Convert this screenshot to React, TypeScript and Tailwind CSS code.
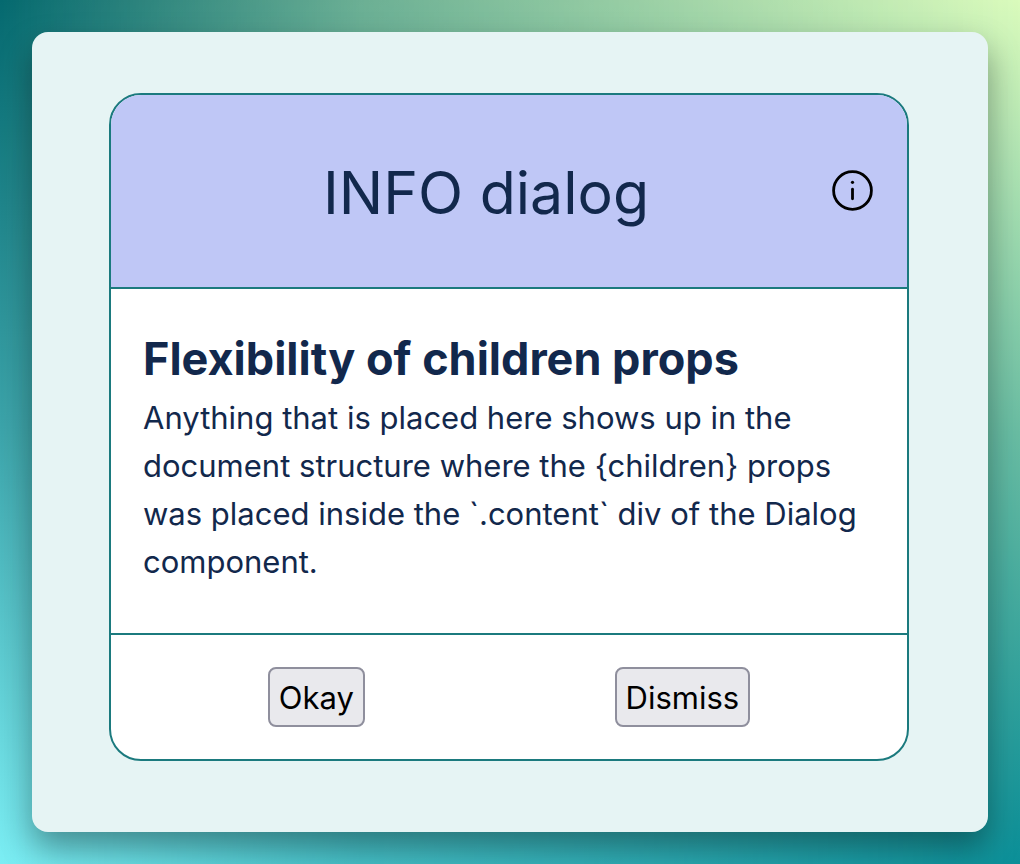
const bodyText =
  "Anything that is placed here shows up in the document structure where the {children} props was placed inside the `.content` div of the Dialog component.";

const buttonClass =
  "rounded-lg border-2 border-[#8f8f9d] bg-[#e9e9ed] px-[9px] pt-[5px] pb-[3px] text-[31px] leading-[48px]";

export default function App() {
  return (
    <div className="relative isolate min-h-screen bg-[linear-gradient(to_bottom,#05696f,#3da5ab_50%,#7ceef4)] p-8 font-['Inter',sans-serif]">
      <div
        aria-hidden="true"
        className="absolute inset-0 -z-10 bg-[linear-gradient(to_bottom,#dafbbc,#69bda3_50%,#0b8f98)] [mask-image:linear-gradient(to_right,transparent,rgba(0,0,0,0.48)_35%,black)]"
      />
      <main className="min-h-[800px] rounded-2xl bg-[#e6f4f4] pt-[61px] pr-[79px] pb-[70px] pl-[77px] shadow-[0_16px_32px_rgba(0,0,0,0.36)]">
        <section
          role="dialog"
          aria-labelledby="dialog-title"
          className="mx-auto max-w-[800px] overflow-hidden rounded-[32px] border-2 border-[#1b7a7e] bg-white text-[#12284c]"
        >
          <header className="grid grid-cols-[1fr_auto] items-center border-b-2 border-[#1b7a7e] bg-[#bfc7f6] px-8 py-12">
            <h1 id="dialog-title" className="pt-1 text-center text-[59px] leading-[92px] font-normal">
              INFO dialog
            </h1>
            <svg viewBox="0 0 46 46" className="size-[46px]" fill="none" stroke="#000" role="img" aria-label="Information">
              <circle cx="23.5" cy="22.5" r="18.9" strokeWidth="2.8" />
              <path d="M23.5 21.2v9.6" strokeWidth="2.8" strokeLinecap="round" />
              <circle cx="23.5" cy="14.3" r="1.6" fill="#000" stroke="none" />
            </svg>
          </header>
          <div className="px-8 pt-[34px] pb-[47px]">
            <h2 className="text-[45px] leading-[71px] font-bold">Flexibility of children props</h2>
            <p className="text-[31px] leading-[48px]">{bodyText}</p>
          </div>
          <footer className="flex justify-around border-t-2 border-[#1b7a7e] p-8 text-black">
            <button type="button" className={buttonClass}>Okay</button>
            <button type="button" className={buttonClass}>Dismiss</button>
          </footer>
        </section>
      </main>
    </div>
  );
}
